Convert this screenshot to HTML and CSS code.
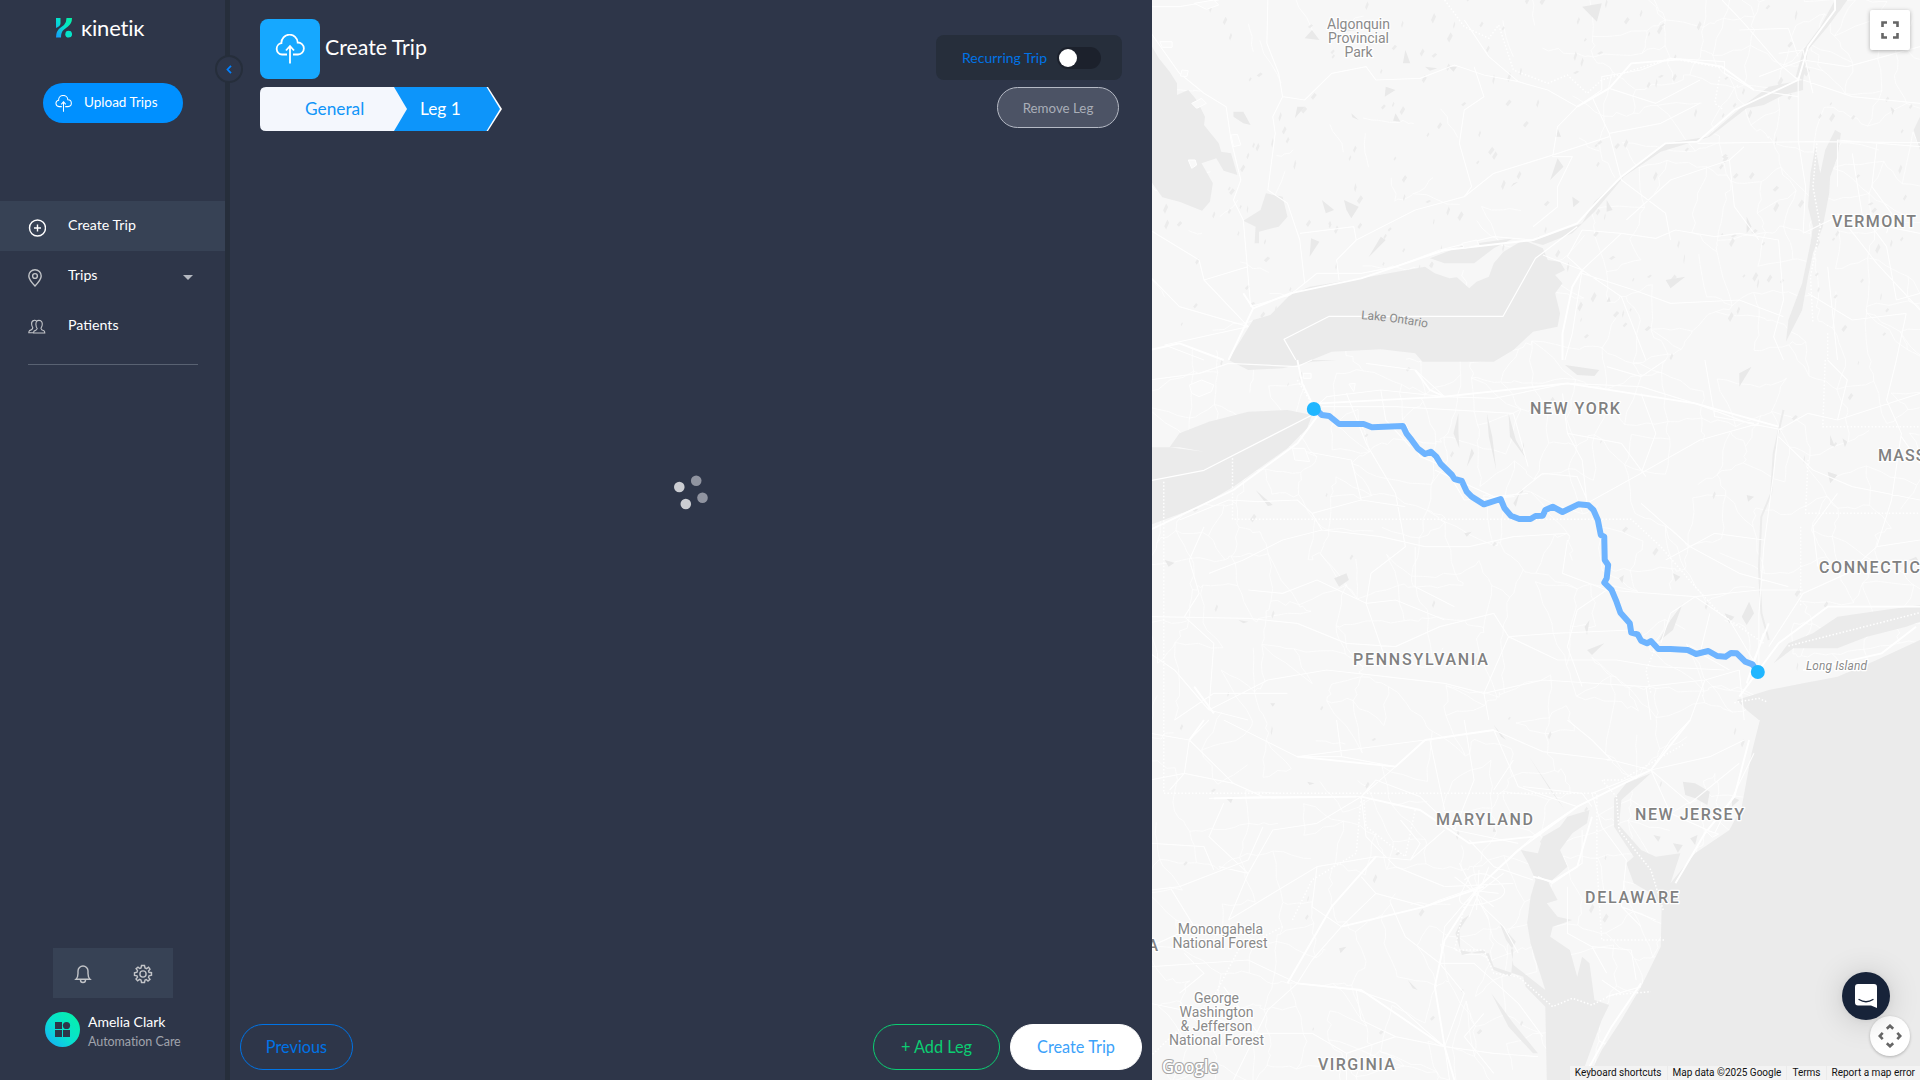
FILE: index.html
```html
<!DOCTYPE html>
<html lang="en">
<head>
<meta charset="utf-8">
<title>Create Trip</title>
<link rel="stylesheet" href="styles.css">
</head>
<body>
<svg class="defs" width="0" height="0" aria-hidden="true">
  <symbol id="cloud" viewBox="0 0 30 30">
    <path d="M12 20.5H7A5.7 5.7 0 0 1 6.4 9.200 7.800 7.800 0 0 1 22.700 8.500 6 6 0 0 1 23 20.500H18M15 29.500V12M11 16.500L15 12 19 16.500"/>
  </symbol>
</svg>
<div class="app">
  <aside class="sidebar">
    <div class="logo">
      <svg width="16" height="20" viewBox="0 0 16 20">
        <defs><linearGradient id="brand" x1="1" y1="0" x2="0" y2="1"><stop offset="0" stop-color="#06f2a2"/><stop offset=".5" stop-color="#04e0d0"/><stop offset="1" stop-color="#1696ff"/></linearGradient></defs>
        <path fill="url(#brand)" d="M0 0H4.500V5.500Q4.500 8 0 10ZM10.500 0H16Q16 5.500 12 8.500L7.500 12Q5 14 5 19.500H0Q0 13 4 10L8 7Q10.500 4.500 10.500 0Z"/><circle cx="12.700" cy="16.200" r="3.400" fill="#05e3c8"/>
      </svg>
      <span class="wordmark" aria-label="kinetik">ĸinetiĸ</span>
    </div>
    <button class="upload"><svg class="line" width="17" height="17"><use href="#cloud"/></svg><span>Upload Trips</span></button>
    <nav>
      <a class="item active"><svg class="ico white" width="18" height="18" viewBox="0 0 18 18"><circle cx="9.500" cy="9" r="8"/><path d="M9.500 5.500V12.500M6 9H13"/></svg><span>Create Trip</span></a>
      <a class="item"><svg class="ico pin" width="18" height="18" viewBox="0 0 18 18"><path d="M7 17Q.8 10.500.8 7A6.200 6.200 0 0 1 13.200 7Q13.200 10.500 7 17Z"/><circle cx="7" cy="7" r="2.400"/></svg><span>Trips</span><i class="caret"></i></a>
      <a class="item"><svg class="ico thin" width="18" height="18" viewBox="0 0 18 18"><path d="M8.500 2Q7.500 1 6 1.400 3.400 2 3.600 5 3.800 7.500 4.800 8.600 4.800 11 1.500 11.600.8 12.500.8 13.800H5M11 1.400C14 1.400 14.500 4 14.200 6 14 8 13 8.500 13 9.500Q13.200 11.200 16 11.800 16.800 12.500 16.800 14H5.500Q5.500 12.200 7 11.600 9 11 9.200 9.500 8 8 7.900 5.500C7.800 3 8.700 1.400 11 1.400Z"/></svg><span>Patients</span></a>
    </nav>
    <hr class="rule">
    <div class="tools">
      <svg class="ico" width="18" height="20" viewBox="0 0 18 20"><path d="M2 15.300Q4 13.500 4 9.500V7A5 5 0 0 1 14 7V9.500Q14 13.500 16 15.300ZM6.500 16A2.500 2.500 0 0 0 11.500 16"/></svg>
      <svg class="ico" width="20" height="20" viewBox="0 0 20 20"><circle cx="10" cy="10" r="3.100"/><path d="M8.500 1.500H11.500L12 4 13.600 4.600 15.600 3.200 17 5.200 15.500 7 16 8.300 18.500 8.700V11.300L16 11.800 15.500 13.300 17 15.300 15 17 13.300 15.500 12 16 11.500 18.500H8.500L8 16 6.600 15.400 4.600 16.900 3 15 4.500 13.200 4 11.800 1.500 11.400V8.700L4 8.200 4.500 6.700 3.100 4.700 5 3.100 6.800 4.500 8 4Z"/></svg>
    </div>
    <div class="user">
      <svg width="35" height="35" viewBox="0 0 35 35"><defs><linearGradient id="av" x1="1" y1="0" x2="0" y2="1"><stop offset=".15" stop-color="#06efb0"/><stop offset=".55" stop-color="#08e0d0"/><stop offset="1" stop-color="#18a8ff"/></linearGradient></defs><circle cx="17.500" cy="17.500" r="17.500" fill="url(#av)"/><g fill="#2e3649"><rect x="10" y="10" width="7" height="7"/><circle cx="21.500" cy="13.500" r="3.600"/><rect x="10" y="18" width="7" height="7"/><rect x="18" y="18" width="7" height="7"/></g></svg>
      <div><div class="name">Amelia Clark</div><div class="org">Automation Care</div></div>
    </div>
    <button class="collapse"><svg width="6" height="9" viewBox="0 0 6 9"><path d="M5 .8L1.500 4.500 5 8.200"/></svg></button>
  </aside>

  <main class="main">
    <header class="head">
      <div class="left">
        <div class="title"><span class="tile"><svg class="line" width="30" height="30"><use href="#cloud"/></svg></span><h1>Create Trip</h1></div>
        <div class="steps">
          <svg width="243" height="44" viewBox="0 0 243 44"><path fill="#fff" d="M100 0H228L242 22 228 44H100Z"/><path fill="#0d95fa" d="M120 0H226.500L240 22 226.500 44H120Z"/><path fill="#f4f7fd" d="M6 0H134L147 22 134 44H6Q0 44 0 38V6Q0 0 6 0Z"/></svg>
          <span class="step general">General</span><span class="step leg">Leg 1</span>
        </div>
      </div>
      <div class="right">
        <div class="recurring"><span>Recurring Trip</span><span class="toggle"></span></div>
        <button class="remove">Remove Leg</button>
      </div>
    </header>
    <div class="loading"><svg width="36" height="36" viewBox="0 0 36 36"><g fill="#cbcdd2"><circle cx="6.300" cy="13" r="5.300"/><circle cx="12.800" cy="30" r="5.300"/></g><g fill="#9094a0"><circle cx="23.200" cy="6.800" r="5.300"/><circle cx="29.500" cy="23.700" r="5.300"/></g></svg></div>
    <footer class="foot">
      <button class="btn prev">Previous</button>
      <button class="btn add">+ Add Leg</button>
      <button class="btn create">Create Trip</button>
    </footer>
  </main>

  <section class="map">
    <svg class="canvas" width="768" height="1080" viewBox="1152 0 768 1080">
      <path id="byways"/>
      <path id="pools"/>
      <g class="geo" transform="matrix(.49107 0 0 .33333 1150 0)">
        <g class="water">
          <path d="M0 130L18 175 40 215 55 250 55 285 78 270 95 300 112 350 110 375 140 430 145 455 165 460 178 525 150 512 135 475 105 490 128 550 122 605 106 632 60 605 25 592 0 540Z"/>
          <path d="M160 1080L210 960 245 945 285 885 325 860 430 835 560 800 580 820 610 835 625 832 650 865 665 845 690 830 700 790 720 755 760 720 800 745 810 780 835 785 845 810 825 825 840 850 825 880 835 940 830 980 780 995 740 1050 700 1085H555L540 1060 470 1048 370 1055 320 1085Z"/>
          <path d="M236 580L270 590 280 650 262 680 222 695V730H213L215 680 190 662 225 630Z"/>
          <path d="M1330 240L1330 270 1290 285 1250 315 1215 325 1140 410 1040 455 965 530 905 635 860 700 800 735 775 725 880 670 905 605 960 530 1050 430 1135 410 1210 315 1260 260Z"/>
          <path d="M1395 0L1420 0 1380 80 1340 150 1330 240 1315 230 1330 150 1365 80Z"/>
          <path d="M1395 390L1407 400 1400 470 1385 530 1383 580 1370 680 1350 760 1340 830 1328 930 1295 1025 1300 960 1328 850 1345 730 1350 680 1340 620 1345 520 1355 440 1365 520 1375 450Z"/>
          <path d="M570 775L640 735 740 715 700 745 660 790 600 790ZM1568 350L1555 390 1568 450Z"/>
        </g>
        <g class="ponds"><path d="M170 335L190 335 205 375 190 370 170 350ZM328 715L345 725 325 770ZM470 710L480 720 445 772ZM395 600L425 620 410 655 400 630ZM350 600L375 630 358 640ZM608 200L625 200 618 215ZM830 475L842 500 815 540ZM880 20L920 10 910 65ZM330 90L345 120 315 115ZM520 150L530 190 515 190ZM300 320L315 320 295 355ZM480 260L500 270 478 290ZM830 385L837 410 825 410ZM500 340L510 365 495 362ZM930 600L942 630 930 635ZM1215 650L1225 680 1215 700ZM860 590L875 605 862 622ZM1508 320L1516 330 1512 345ZM740 550L750 545 735 560ZM400 75L420 90 395 95ZM560 200L585 205 570 212ZM410 340L425 360 412 352ZM930 905L935 890 938 905ZM1050 840L1090 830 1060 865Z"/></g>
        <g class="roads">
          <path class="m" d="M0 95L60 220 110 280 155 320 165 420 185 540 170 600 190 660 205 920M240 0L238 130 262 220 270 290 250 350 255 400 240 570 280 610 305 720 315 850M270 290L315 300 370 220 440 200 460 240 550 235 620 195 680 225 750 245 810 270 870 320M640 60L690 170 750 245M0 690L100 780 110 840 200 980M110 840L200 800M870 320L920 270 920 230 1000 210 1060 175 1170 185 1170 220 1230 270 1320 290M870 320L830 380 820 470 860 470 830 560 830 620 780 680M900 290L935 400 960 540 1050 640 1060 720M935 400L1040 370 1120 310M540 630L640 590 700 520 810 470 935 410M640 590L655 560 630 430 640 330 680 290 660 200M935 265L1030 310 1120 240M1115 430L1350 425 1568 428M1320 230L1320 420 1335 560 1330 700M1330 240L1430 290 1568 310M1200 90L1300 85 1320 170M1165 0L1210 70 1280 190 1320 240M420 720L540 630M305 700L415 680 420 720 380 780 385 840M205 920L285 885 340 820 430 820 500 800 590 750 700 710 780 720M1280 160L1330 150 1350 280M1240 230L1330 180 1420 200 1568 140M880 810L960 700 880 690 850 770 880 810 860 1000 845 1080M880 810L800 765M880 810L960 890 1010 1080M960 700L1030 715 1070 690 1150 710 1200 700 1280 720 1290 900 1270 1010 1290 1080M880 820L985 870 1060 910 1200 900 1290 950M970 660L1060 540 1180 480 1210 440M1180 480L1190 620 1240 720M1330 700L1400 650 1568 700M1400 560L1400 420 1568 440M1400 640L1480 790 1568 930M1430 460L1450 640 1500 740 1520 900 1568 880M1380 800L1400 1080M1480 430L1470 560 1510 640 1500 700M1540 940L1520 1080M1340 880L1430 960 1540 940M140 0L60 20 0 20M0 830L60 920 200 980 30 1035 110 1080"/>
          <path class="w" d="M160 1080L210 925 285 880 430 835 600 750 780 720 870 670 920 590 960 530 1050 430 1115 425 1190 330 1320 240 1340 140 1395 30 1395 0M870 320L935 265 980 190 1080 178 1165 200 1230 270M840 1080L840 1000 860 860 880 810M0 1050L60 1030 150 1080M190 880L210 925"/>
          <path class="b" d="M297 1080L273 1018 365 949H719L785 775 870 680"/>
          <path class="dot" d="M600 0L640 80 690 115 710 75 740 210 810 250 850 225 890 280 920 240 1060 175 1170 205M1358 430L1350 560 1365 680 1345 830 1350 970M1380 1000V1080M1160 230L1150 310 1168 330"/>
          <path class="patch" d="M90 10L130 0 140 15 115 28ZM20 125H45V142H25ZM65 210L78 212 75 230 62 228ZM165 405L178 403 185 435 170 440ZM85 310L105 295 115 310 95 325ZM635 730L665 720 670 735 640 745ZM78 480L92 480 95 495 85 505Z"/>
        </g>
      </g>
      <g class="geo" transform="matrix(.49107 0 0 .33333 1150 360)">
        <g class="water">
          <path d="M160 0L200 30 270 25 330 5 380 0Z"/>
          <path d="M0 262L40 262 60 220 120 185 200 155 280 150 330 165 320 205 280 265 170 380 100 440 0 495Z"/>
          <path d="M1568 735L1470 755 1400 770 1350 820 1300 850 1270 910 1310 865 1400 865 1460 830 1540 800 1568 785ZM1568 840L1480 900 1400 950 1330 970 1260 990 1195 1020 1215 1050 1240 1080H1568Z"/>
        </g>
        <path class="patch" d="M40 262L110 275 60 262Z"/>
        <g class="ponds"><path d="M375 655L400 640 405 660 385 680ZM1380 335L1400 345 1385 370ZM1385 225L1395 260 1385 255ZM1410 235L1420 245 1415 262ZM1220 725L1230 760 1215 795 1205 770ZM1080 740L1085 730 1065 810 1035 845 1060 780ZM890 870L925 850 900 885ZM845 15L915 30 905 48 870 45ZM1200 40L1225 20 1200 80ZM1215 405L1230 410 1218 425ZM30 600L50 608 38 620ZM640 520L655 515 645 530ZM180 780L200 785 190 790ZM885 800L895 780 890 825ZM245 1030L255 1030 250 1040ZM955 655L965 645 962 670ZM1545 600L1560 590 1568 610ZM740 430L752 400 745 440ZM1170 760L1190 770 1180 790ZM215 390L250 435 240 438ZM1065 640L1080 650 1070 665Z"/>
          <path d="M628 160L618 220 630 265 628 215ZM686 160L690 230 705 330 697 230ZM730 160L733 230 768 300 745 240ZM655 265L645 320 660 280Z"/><path class="lake" d="M1290 150L1270 280 1265 400 1245 470 1240 620 1245 760 1260 840"/></g>
        <g class="roads">
          <path class="m" d="M0 60L100 40 160 10 300 20 330 0M330 150L360 110 470 90 600 110 700 115 850 70 1000 80 1110 130 1220 190 1290 210M350 140L500 140 740 160M520 190L550 290 600 320 640 420 740 410 800 340 870 350 890 420M840 100L850 220 880 300 890 430M1130 0L1150 170 1230 190M890 430L1000 340 1120 240 1240 190M1280 210L1270 340 1250 560 1240 760 1240 930M1280 210L1340 160 1400 180 1568 100M1280 230L1350 330 1430 380 1568 420M1520 0L1500 120 1530 220 1510 420 1480 560M1480 560L1420 640 1330 700 1260 860M1480 560L1568 540M1110 710L1240 690 1330 690M930 690L1110 710 1180 780 1240 930M1110 710L1060 760 1040 850M60 480L160 420 220 425 300 420 330 460 430 420 520 440M330 460L350 510 470 530 560 560 650 560 740 530 850 520M110 500L80 600 100 700 70 770 130 850 120 1050M0 770L200 775 300 790 400 850 500 860 590 800 700 760 730 830 820 820 980 810M120 640L190 600 270 540 350 510M200 690L270 700 340 660 440 730 500 720 600 780M580 330L700 410 770 400M400 100L440 250 500 400 520 560 450 640 440 730 480 900M730 830L680 1000 690 1080M730 830L830 900 950 900 1030 920 1170 930M680 1000L800 960 1010 980 1130 960 1200 930M120 1050L240 960 360 930 480 950 600 970 680 1000M120 1050L200 1080M120 1050L50 930 0 880M50 1080L130 1000 280 1000M1000 430L1100 560 1200 640 1300 680M1000 100L1030 220 1000 340M930 20L1000 50 1050 0M600 110L540 30 440 10M470 90L480 180 530 260M1010 980L1020 1080M930 690L870 750 850 860 880 980M1400 400L1350 500 1360 620M1530 230L1568 310M1400 180L1420 60 1380 0M740 160L770 320M850 220L960 250 1010 350M430 420L410 300 300 270M540 560L540 680 620 740M850 540L840 640 930 690M1050 600L1150 520 1250 540M1200 930L1210 1080M1130 960L1100 1080M1180 930L1120 880 1140 760"/>
          <path class="w" d="M0 510L170 390 300 250 340 170M345 130L600 110 850 70 1110 130 1280 200M300 0L310 70 330 130M540 30L570 90 600 110M1240 930L1280 850 1380 740 1568 740M1240 930L1200 1010M1330 930L1400 910 1490 880 1560 800M90 980L130 1060M1230 900L1260 790M1215 970L1250 820"/>
          <path class="b" d="M0 362L110 331 330 165"/>
          <path class="dot" d="M28 365V650M28 650V1080M168 295V478H980L1040 560 1110 680 1160 760 1250 850M1375 0L1370 200H1568M1340 300L1335 460H1568M1325 500V740M1300 858L1568 758M1190 1028L1240 1015 1255 1025M1035 845L1010 930 1020 1000M300 60L325 120 320 150"/>
          <path class="patch" d="M80 75L105 60 130 75 125 95 100 110 85 100ZM290 265H315L325 305 295 300ZM405 72L418 70 415 95ZM312 40H328V55H312Z"/>
        </g>
      </g>
      <g class="geo" transform="matrix(.49107 0 0 .33333 1150 720)">
        <g class="water">
          <path d="M1242 0H1568V1080H890L920 990 960 900 1000 800 1040 680 1042 560 1020 520 985 490 970 430 985 410 945 320 945 235 970 190 1020 160 960 240 955 315 1000 390 1030 410 1080 400 1060 490 1110 400 1180 330 1205 260 1225 100Z"/>
          <path d="M895 270L850 290 835 320 800 350 790 400 755 390 770 430 785 480 775 530 768 610 775 670 790 740 805 810 740 735 735 690 745 665 712 610 725 660 740 690 735 770 700 750 680 690 635 705 622 640 635 600 650 585 630 630 632 690 660 700 690 700 700 740 760 770 765 800 805 860 808 1080H875L900 980 920 900 935 855 905 840 895 730 880 710 870 770 855 690 815 650 820 620 860 600 830 590 808 550 830 540 812 490 850 440 835 390 860 340 890 310Z"/>
          <path d="M695 820L740 910 790 1000 780 1000 730 920Z"/>
        </g>
        <g class="ponds"><path d="M1085 185L1110 190 1140 215 1135 255 1110 235 1090 225ZM1025 345L1040 350 1035 365ZM1065 370L1085 375 1075 398ZM155 235L170 230 165 250ZM320 185L335 190 325 195ZM1100 355L1115 345 1110 375ZM700 15L725 60 715 50ZM770 105L815 210 845 270 790 150ZM385 685L400 680 388 700ZM525 780L545 810 535 805ZM1185 230L1200 240 1185 260ZM700 320L705 335 698 335Z"/></g>
        <g class="roads">
          <path class="m" d="M0 40L80 60 170 190 230 230 120 235M80 60L120 0M80 60L70 160 40 210M230 230L430 230 460 180 550 230 620 330 750 370M560 60L700 30 800 95 940 120 1020 150M300 110L390 110 500 140 560 60M500 140L430 230 440 350 500 440 600 500M390 110L380 0M430 230L340 310 250 330 200 460 140 440M230 320L200 420 60 500 0 510M150 250L120 350 200 460 160 600M0 370L110 380 130 450M600 270L570 60M640 0L660 180 620 330M700 30L750 200 870 260M870 260L780 350 670 500M1020 150L900 220 920 320 970 420 960 560 1000 620M880 330L880 430 820 490 790 470M850 500L850 640 900 680 930 760M960 560L1030 600M1020 150L1060 60 1100 0M1020 150L1140 110 1210 60M1020 150L1100 250 1200 130M1020 150L1060 280 1150 340M1150 340L1230 100M670 500L590 540 560 560 460 520 430 470M460 520L390 620 330 720 300 790 420 810 500 850 560 930 600 980M670 500L600 620 590 730 640 820 600 980M600 980L700 1000 790 1010M600 980L500 950 400 1000 330 940 220 940 150 800M600 980L610 1080M300 790L240 870 170 1080M300 790L200 720 0 740M670 550L720 620 750 700M590 730L660 730 750 850 800 950M0 850L100 880 220 940M400 1080L400 1000M420 810L430 900 500 950M460 410L340 440 250 520 160 600M340 440L330 560 390 620M530 420L600 330M510 300L550 370 530 420 460 410M900 680L980 690 990 780M920 780L960 820M650 360L700 440 780 480M670 500L760 380M940 120L900 60 850 0M900 260L880 220 760 200M740 120L700 210M150 0L300 110 560 60M0 180L70 160 170 190M40 500L90 620 0 680M70 700L110 760 60 820M680 880L640 950 700 1060M490 550L520 650 590 730M1000 800L930 830"/>
          <path class="w" d="M560 60L700 30M80 60L110 0M430 230L550 270 650 370 780 350 870 260 1020 150 1100 0M680 500L560 560 390 620M670 500L600 660 580 800 600 980 620 1080M460 410L370 560 280 790M300 790L430 810 540 920 600 980M670 500L750 390 870 260M1070 490L1130 340 1190 230 1220 60M880 1080L940 920 1000 790M780 470L820 485 870 440 900 290M130 235L420 230M300 110L500 140 560 60"/>
          <path class="m" d="M640 480Q675 440 710 485T680 550 635 515 650 470M650 510L710 520M670 450L665 570M640 550L720 460M620 470L700 560M690 440L650 590M600 500L740 490M630 430L690 600"/>
          <path class="dot" d="M28 0V220H910V430L920 660H1050M1045 570L1020 450 955 330 950 230 920 180 960 180 1090 70M540 270L520 410 440 320 435 230M640 560L620 690 680 690 700 760 750 770 820 860 860 835 900 855 940 825 1020 815M0 1010L130 830 180 690 270 620M290 600L330 480 420 400 430 230"/>
          <path class="patch" d="M1130 330L1158 342 1145 352Z"/>
        </g>
      </g>
      <g class="route" transform="matrix(.49107 0 0 .33333 1150 360)"><path d="M340 151L350 165 365 168 385 192 435 192 452 202 515 198 522 220 530 235 545 265 560 282 572 275 583 290 592 312 615 345 620 357 635 363 645 395 655 410 680 433 714 417 722 445 735 467 752 477 775 477 785 468 800 467 805 450 820 440 840 456 872 433 893 436 903 450 912 480 918 525 925 530 926 600 933 615 930 655 925 668 940 690 950 725 958 758 977 790 980 818 993 823 1000 842 1012 850 1020 843 1035 867 1060 867 1095 870 1112 882 1137 873 1155 888 1172 890 1183 879 1195 880 1212 905 1227 913 1237 935"/></g>
      <g fill="#20b6ff"><circle cx="1313.800" cy="409" r="7"/><circle cx="1757.800" cy="672" r="7"/></g>
      <g class="state">
        <text x="1832" y="227" textLength="85">VERMONT</text><text x="1530" y="414" textLength="91">NEW YORK</text>
        <text x="1878" y="461">MASS</text><text x="1819" y="573" textLength="102">CONNECTIC</text>
        <text x="1353" y="665" textLength="136">PENNSYLVANIA</text><text x="1436" y="825" textLength="98">MARYLAND</text>
        <text x="1635" y="820" textLength="110">NEW JERSEY</text><text x="1585" y="903" textLength="95">DELAWARE</text>
        <text x="1318" y="1070" textLength="78">VIRGINIA</text><text x="1147.500" y="951">A</text>
      </g>
      <g class="park">
        <text x="1358.500" y="29">Algonquin</text><text x="1358.500" y="43">Provincial</text><text x="1358.500" y="57">Park</text>
        <text x="1220.500" y="934">Monongahela</text><text x="1220" y="948">National Forest</text>
        <text x="1216.500" y="1003">George</text><text x="1216.500" y="1017">Washington</text><text x="1216.500" y="1031">&amp; Jefferson</text><text x="1216.500" y="1045">National Forest</text>
      </g>
      <path id="ontario" fill="none" d="M1361 319Q1395 321.500 1432 328.500"/>
      <text class="lakename"><textPath href="#ontario" textLength="67">Lake Ontario</textPath></text>
      <text class="isle" x="1806" y="670" textLength="61">Long Island</text>
      <text class="google" x="1162" y="1073" textLength="56" lengthAdjust="spacingAndGlyphs">Google</text>
    </svg>
    <button class="full"><svg width="18" height="18" viewBox="0 0 18 18"><path d="M1.500 6V1.500H6M12 1.500H16.500V6M16.500 12V16.500H12M6 16.500H1.500V12"/></svg></button>
    <button class="pan"><svg width="24" height="24" viewBox="0 0 24 24"><path d="M8.800 4.700L12 1.700 15.200 4.700M8.800 19.300L12 22.300 15.200 19.300M4.700 8.800L1.700 12 4.700 15.200M19.300 8.800L22.300 12 19.300 15.200"/></svg></button>
    <button class="chat"><svg width="24" height="26" viewBox="0 0 24 26"><path fill="#fff" d="M4 1H20Q23 1 23 4V25L17 22.500H4Q1 22.500 1 19.500V4Q1 1 4 1Z"/><path d="M5 16.500Q12 21 19 16.500" fill="none" stroke="#172339" stroke-width="1.300" stroke-linecap="round"/></svg></button>
    <div class="credits"><span>Keyboard shortcuts</span><span>Map data ©2025 Google</span><span>Terms</span><span>Report a map error</span></div>
  </section>
</div>
<script src="map.js"></script>
</body>
</html>
```
FILE: styles.css
```css
* { box-sizing: border-box; }
body { margin: 0; background: #2e3649; font-family: Lato, "Open Sans", sans-serif; color: #fff; }
button { font: inherit; padding: 0; border: 0; display: flex; align-items: center; justify-content: center; }
.defs { position: absolute; }
.app { display: flex; width: 1920px; height: 1080px; overflow: hidden; }

.sidebar { position: relative; display: flex; flex-direction: column; width: 230px; flex: none; border-right: 5px solid #262e3b; }
.logo { display: flex; gap: 9px; height: 83px; padding: 18px 0 0 56px; }
.wordmark { font-size: 22px; line-height: 20px; letter-spacing: -.2px; }
.upload { width: 140px; height: 40px; margin-left: 43px; border-radius: 20px; background: #0090ff; color: #fff; font-size: 13.500px; gap: 12px; padding: 0 0 2px 12px; justify-content: flex-start; flex: none; }
.upload svg { margin-top: 2px; }
.line { fill: none; stroke: #fff; stroke-width: 1.8; overflow: visible; }
nav { margin-top: 78px; }
.item { display: flex; align-items: center; height: 50px; padding-left: 28px; font-size: 14.200px; }
.item span { margin: -4px 0 0 22px; }
.item.active { background: #374255; }
.item svg { margin-top: 3px; }
.ico { fill: none; stroke: #c2c4c8; stroke-width: 1.4; }
.ico.white { stroke: #fff; margin-top: 4px; }
.thin { stroke-width: 1.1; }
.caret { margin-left: auto; margin-right: 32px; border: 5px solid transparent; border-top-color: #b4b8c0; border-bottom: 0; margin-top: 2px; }
.rule { width: 170px; margin: 13px 0 0 28px; border: 0; border-top: 1px solid #596272; }
.tools { display: flex; justify-content: space-around; align-items: center; width: 120px; height: 50px; margin: auto 0 0 53px; padding-top: 2px; background: #374255; }
.user { display: flex; gap: 8px; height: 82px; padding: 14px 0 0 45px; }
.name { font-size: 14px; line-height: 18px; margin-top: 1px; }
.org { font-size: 12.500px; line-height: 18px; margin-top: 2px; color: #a0a3ac; letter-spacing: -.05px; }
.collapse { position: absolute; left: 215px; top: 55px; width: 28px; height: 28px; border: 2px solid #262e3b; border-radius: 50%; background: #2e3649; }
.collapse path { fill: none; stroke: #0080ff; stroke-width: 1.8; }

.main { display: flex; flex-direction: column; width: 922px; flex: none; }
.head { display: flex; justify-content: space-between; padding: 19px 30px 0; }
.title { display: flex; align-items: center; gap: 5px; height: 60px; }
.tile { display: flex; align-items: center; justify-content: center; width: 60px; height: 60px; border-radius: 8px; background: #16a8ff; }
.title h1 { margin: 0 0 4px; font-size: 21.300px; font-weight: 400; }
.steps { display: grid; grid-template-columns: 147px 96px; margin-top: 8px; height: 44px; align-items: center; font-size: 17.300px; }
.steps svg { grid-area: 1 / 1 / 2 / 3; }
.step { grid-row: 1; z-index: 1; padding-bottom: 2px; }
.general { grid-column: 1; padding-left: 45px; color: #1095f8; }
.leg { grid-column: 2; padding-left: 13px; }
.right { display: flex; flex-direction: column; align-items: flex-end; padding-top: 16px; }
.recurring { display: flex; align-items: center; width: 186px; height: 45px; padding: 0 21px 0 26px; justify-content: space-between; border-radius: 8px; background: #262e3b; color: #0073e6; font-size: 14px; }
.recurring span:first-child { padding-bottom: 1px; }
.toggle { width: 44px; height: 22px; border-radius: 11px; background: #1c212c; padding: 2px; }
.toggle::before { content: ""; display: block; width: 18px; height: 18px; border-radius: 50%; background: #fff; }
.remove { width: 122px; height: 41px; margin: 7px 3px 0 0; border: 1px solid #b5bac5; border-radius: 21px; background: #4c5365; color: #a9aeb8; font-size: 13.300px; }
.loading { flex: 1; padding: 343px 0 0 443px; }
.foot { display: flex; gap: 10px; height: 56px; padding: 0 10px; }
.btn { height: 46px; padding-bottom: 2px; border-radius: 23px; border: 1px solid; background: none; font-size: 16.300px; }
.prev { width: 113px; margin-right: auto; color: #0073e6; }
.add { width: 127px; color: #0bce72; }
.create { width: 132px; background: #fff; border-color: #fff; color: #3ca2fa; }

.map { position: relative; flex: 1; background: #f7f7f7; overflow: hidden; font-family: Roboto, sans-serif; }
.canvas { display: block; }
#byways { fill: none; stroke: #fff; stroke-width: .9; opacity: .75; stroke-linejoin: round; }
#pools { fill: #ececec; }
.geo path, .route path { vector-effect: non-scaling-stroke; }
.water { fill: #ebebeb; }
.ponds { fill: #e9e9e9; }
.lake { fill: none; stroke: #ececec; stroke-width: 2; }
.roads { fill: none; stroke: #fff; stroke-linejoin: round; }
.m { stroke-width: 1.2; opacity: .9; }
.w { stroke-width: 1.9; }
.b { stroke-width: 1.2; }
.dot { stroke-width: 1.5; stroke-dasharray: 1.5 2; }
.patch { fill: #f9f9f9; }
.route { fill: none; stroke: #6eb4ff; stroke-width: 6; stroke-linejoin: round; stroke-linecap: round; }
.canvas text { fill: #8a8a8a; stroke: #fff; stroke-width: 2.500px; paint-order: stroke; stroke-linejoin: round; }
.canvas .state text { font-size: 16px; font-weight: 500; fill: #818181; letter-spacing: 1.1px; }
.park text { font-size: 14px; text-anchor: middle; }
.canvas .lakename { font-size: 12px; stroke-width: 1px; stroke: #ebebeb; }
.canvas .isle { font-size: 12px; font-style: italic; }
.canvas .google { font-family: "Open Sans", sans-serif; font-weight: 600; font-size: 18px; fill: #fff; stroke: #a6a6a6; stroke-width: 2.200px; }
.full { position: absolute; left: 718px; top: 10px; width: 40px; height: 40px; border-radius: 2px; background: #fff; box-shadow: 0 1px 4px rgba(0,0,0,.3); }
.full path, .pan path { fill: none; stroke: #666; stroke-width: 2.600; }
.pan { position: absolute; left: 718px; top: 1016px; width: 40px; height: 40px; border-radius: 50%; background: #fff; box-shadow: 0 1px 3px rgba(0,0,0,.25); }
.chat { position: absolute; left: 690px; top: 972px; width: 48px; height: 48px; border-radius: 50%; background: #172339; box-shadow: 0 1px 6px rgba(0,0,0,.06), 0 2px 32px rgba(0,0,0,.16); }
.credits { position: absolute; right: 0; bottom: 0; display: flex; gap: 1px; height: 14px; color: #111; font-size: 10px; line-height: 14px; }
.credits span { padding: 0 5px; background: #f3f3f3; white-space: nowrap; }
```
FILE: map.js
```js
// Minor roads and small ponds, spread over the land with a fixed seed.
let seed = 11;
const rnd = () => (seed = (seed * 16807) % 2147483647) / 2147483647;
const step = 30, cols = 28, rows = 38;
const node = [];
for (let r = 0; r < rows; r++) {
  node.push([]);
  for (let c = 0; c < cols; c++)
    node[r].push([1140 + (c + rnd() * .9) * step, -20 + (r + rnd() * .9) * step]);
}
const link = (a, b) => {
  let d = `M${a[0].toFixed(1)} ${a[1].toFixed(1)}`;
  for (const t of [.25, .5, .75])
    d += `L${(a[0] + (b[0] - a[0]) * t + rnd() * 5 - 2.5).toFixed(1)} ${(a[1] + (b[1] - a[1]) * t + rnd() * 5 - 2.5).toFixed(1)}`;
  return d + `L${b[0].toFixed(1)} ${b[1].toFixed(1)}`;
};
let roads = "", pools = "";
for (let r = 0; r < rows - 1; r++)
  for (let c = 0; c < cols - 1; c++) {
    const north = r < 12 && c < 15;
    const p = north ? .08 : .62;
    if (rnd() < p) roads += link(node[r][c], node[r][c + 1]);
    if (rnd() < p) roads += link(node[r][c], node[r + 1][c]);
    if (rnd() < p * .2) roads += link(node[r][c], node[r + 1][c + 1]);
  }
for (let i = 0; i < 330; i++) {
  const x = 1160 + rnd() * 750, y = rnd() * (i < 200 ? 340 : 1070);
  const w = 1 + rnd() * 3, h = 2 + rnd() * 5;
  pools += `M${x.toFixed(1)} ${y.toFixed(1)}l${w.toFixed(1)} ${(-h).toFixed(1)} ${(w * .6).toFixed(1)} ${(h * .5).toFixed(1)} ${(-w).toFixed(1)} ${h.toFixed(1)}z`;
}
document.getElementById("byways").setAttribute("d", roads);
document.getElementById("pools").setAttribute("d", pools);
```
